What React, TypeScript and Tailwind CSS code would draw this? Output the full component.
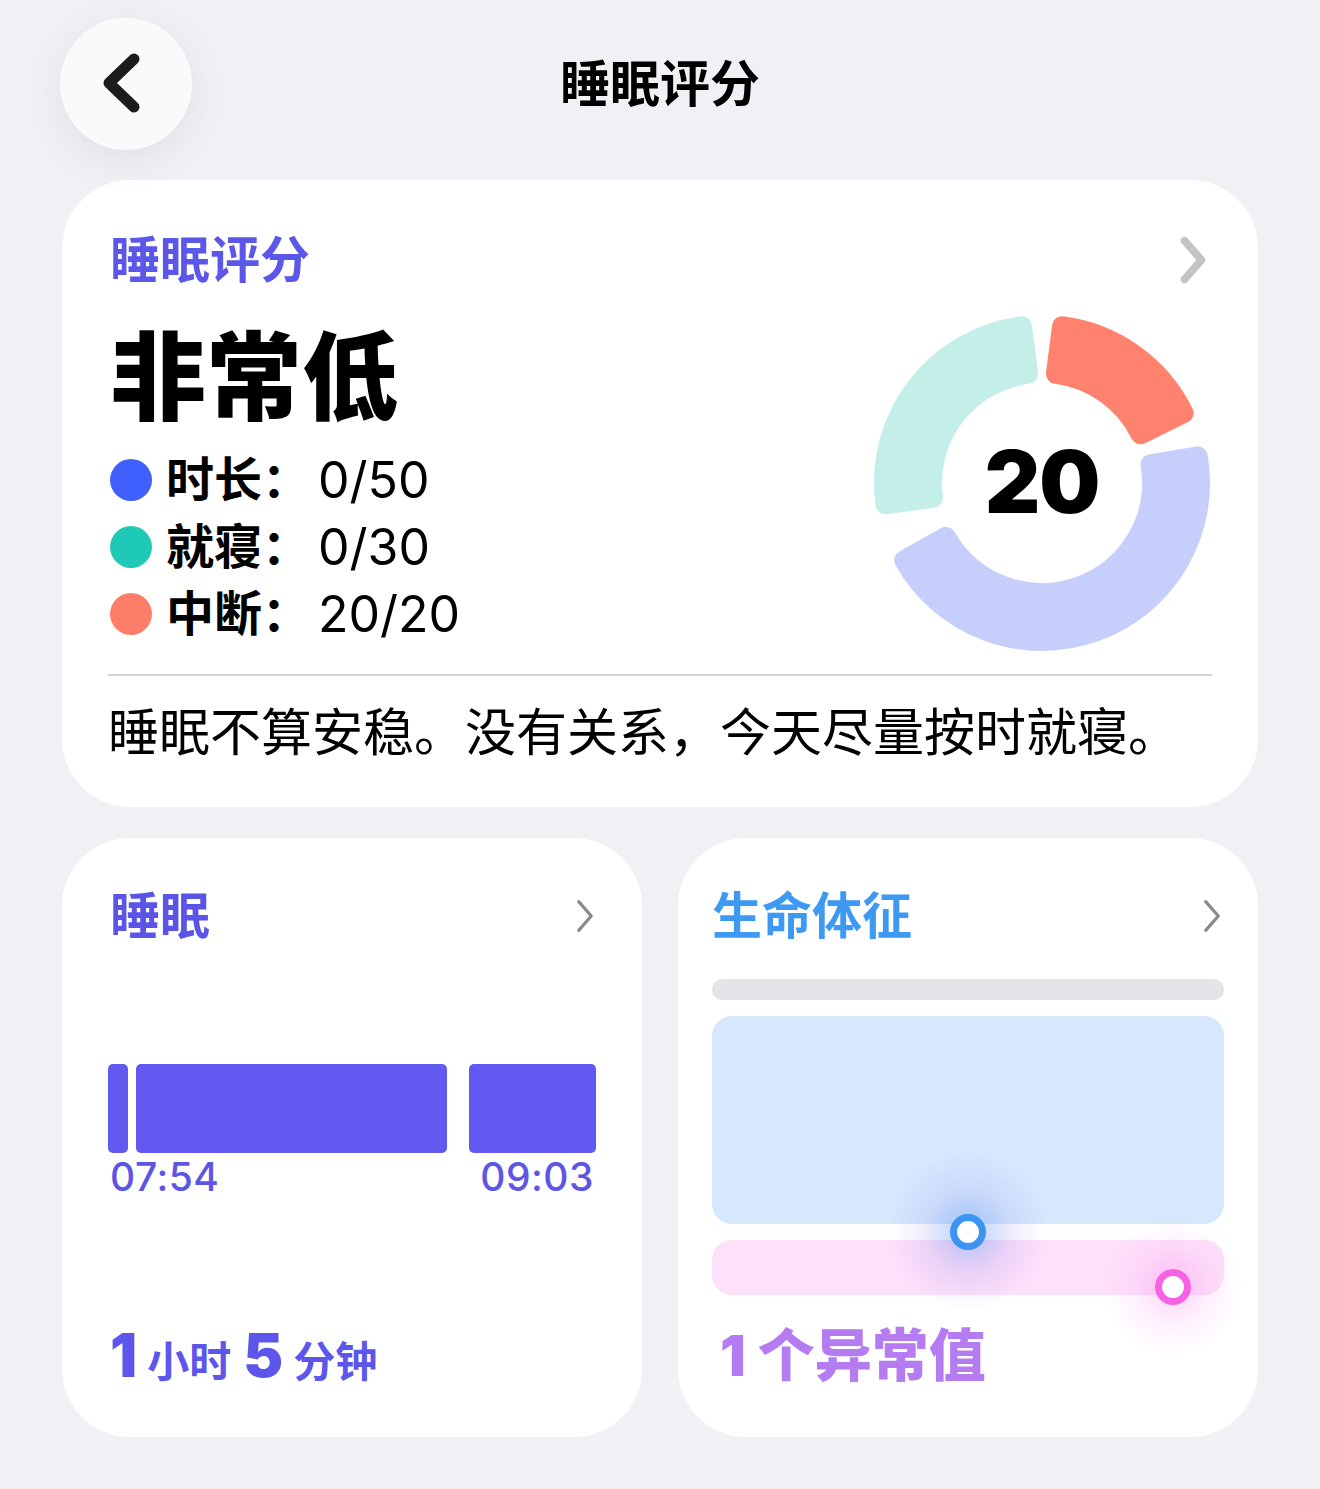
import React from 'react'

// donut geometry: 336px box, ring between r=100 and r=168
const C = 168
const STROKE = 20

function point(angle: number, r: number) {
  const t = (angle * Math.PI) / 180
  return [C + r * Math.sin(t), C - r * Math.cos(t)]
}

// annular sector, angles clockwise from 12 o'clock; inset by half the stroke so round joins soften the corners
function sector(a0: number, a1: number) {
  const ro = 168 - STROKE / 2
  const ri = 100 + STROKE / 2
  const pad = (STROKE / 2 / 134) * (180 / Math.PI)
  const s = a0 + pad
  const e = a1 - pad
  const large = e - s > 180 ? 1 : 0
  const [x0, y0] = point(s, ro)
  const [x1, y1] = point(e, ro)
  const [x2, y2] = point(e, ri)
  const [x3, y3] = point(s, ri)
  return `M${x0} ${y0} A${ro} ${ro} 0 ${large} 1 ${x1} ${y1} L${x2} ${y2} A${ri} ${ri} 0 ${large} 0 ${x3} ${y3} Z`
}

const segments = [
  { from: 258, to: 357, color: '#c3efe8' },
  { from: 3, to: 68, color: '#fe826e' },
  { from: 76, to: 245, color: '#c6cffb' },
]

const legend = [
  { label: '时长：', value: '0/50', dot: 'bg-[#4060fe]' },
  { label: '就寝：', value: '0/30', dot: 'bg-[#1ec9b5]' },
  { label: '中断：', value: '20/20', dot: 'bg-[#fe7d69]' },
]

function ChevronRight({ className }: { className?: string }) {
  return (
    <svg viewBox="0 0 24 40" className={className} fill="none" stroke="currentColor" strokeLinecap="round" strokeLinejoin="round">
      <path d="M5 4 L19 20 L5 36" />
    </svg>
  )
}

function ScoreRing() {
  return (
    <div className="relative w-[336px] h-[336px] mt-[27px]">
      <svg width="336" height="336" viewBox="0 0 336 336">
        {segments.map((s) => (
          <path key={s.from} d={sector(s.from, s.to)} fill={s.color} stroke={s.color} strokeWidth={STROKE} strokeLinejoin="round" />
        ))}
      </svg>
      <div className="absolute inset-0 flex items-center justify-center">
        <span className="text-[86px] font-black leading-none text-black tracking-[-1px] -mt-[2px]">20</span>
      </div>
    </div>
  )
}

export default function App() {
  return (
    <div className="min-h-screen w-[1320px] bg-[#f1f0f5] px-[62px] pb-[52px] font-[Inter,'Noto_Sans_CJK_SC',sans-serif]">
      {/* Header */}
      <div className="grid grid-cols-[132px_1fr_132px] items-center pt-[18px] mb-[30px]">
        <button className="w-[132px] h-[132px] -ml-[2px] rounded-full bg-[#fafafc] shadow-[0_10px_40px_rgba(0,0,0,0.07)] flex items-center justify-center">
          <svg width="44" height="64" viewBox="0 0 44 64" fill="none" stroke="#1c1c1e" strokeWidth="11" strokeLinecap="round" strokeLinejoin="round" className="-ml-[10px]">
            <path d="M35 7 L10 31 L35 55" />
          </svg>
        </button>
        <h1 className="text-center text-[50px] font-bold leading-[56px] text-black">睡眠评分</h1>
        <div />
      </div>

      {/* Score card */}
      <div className="rounded-[68px] bg-white px-[48px] pt-[52px] pb-[44px]">
        <div className="flex items-center justify-between h-[56px]">
          <h2 className="text-[50px] font-bold leading-[56px] text-[#5b57e8]">睡眠评分</h2>
          <ChevronRight className="w-[30px] h-[48px] stroke-[6.5px] text-[#c4c4c8] mr-[2px]" />
        </div>

        <div className="flex items-start justify-between">
          <div className="pt-[37px]">
            <div className="text-[96px] font-black leading-[104px] text-black">非常低</div>
            <div className="mt-[17px] flex flex-col">
              {legend.map((row) => (
                <div key={row.label} className="flex items-center h-[67px]">
                  <span className={`w-[42px] h-[42px] rounded-full ${row.dot}`} />
                  <span className="ml-[14px] text-[48px] font-bold leading-none text-black">{row.label}</span>
                  <span className="ml-[8px] text-[50px] font-normal leading-none text-black">{row.value}</span>
                </div>
              ))}
            </div>
          </div>
          <ScoreRing />
        </div>

        <div className="mt-[23px] h-[1.5px] bg-[#d3d3d7] -mx-[2px]" />
        <p className="mt-[27px] text-[51px] leading-[60px] text-black -ml-[2px]">睡眠不算安稳。没有关系，今天尽量按时就寝。</p>
      </div>

      {/* Bottom cards */}
      <div className="grid grid-cols-2 gap-[36px] mt-[31px]">
        <div className="rounded-[68px] bg-white h-[599px] px-[48px] pt-[50px] flex flex-col">
          <div className="flex items-center justify-between h-[56px]">
            <h2 className="text-[50px] font-bold leading-[56px] text-[#5a55e6]">睡眠</h2>
            <ChevronRight className="w-[22px] h-[36px] stroke-[3.5px] text-[#88888d] -mr-[2px]" />
          </div>
          <div className="mt-[120px] flex h-[89px] -mx-[2px]">
            <div className="w-[20px] rounded-[5px] bg-[#6259f1]" />
            <div className="ml-[8px] flex-1 rounded-[5px] bg-[#6259f1]" />
            <div className="ml-[22px] w-[127px] rounded-[5px] bg-[#6259f1]" />
          </div>
          <div className="mt-[4px] flex justify-between text-[39px] font-medium leading-[40px] text-[#5d56e4] tracking-[0.5px]">
            <span>07:54</span>
            <span>09:03</span>
          </div>
          <div className="mt-[126px] flex items-baseline text-[#5d56ea] leading-[64px]">
            <span className="text-[60px] font-black">1</span>
            <span className="ml-[10px] text-[42px] font-bold">小时</span>
            <span className="ml-[12px] text-[60px] font-black">5</span>
            <span className="ml-[10px] text-[42px] font-bold">分钟</span>
          </div>
        </div>

        <div className="rounded-[68px] bg-white h-[599px] px-[34px] pt-[50px] flex flex-col">
          <div className="flex items-center justify-between h-[56px]">
            <h2 className="text-[50px] font-bold leading-[56px] text-[#3d99f2]">生命体征</h2>
            <ChevronRight className="w-[22px] h-[36px] stroke-[3.5px] text-[#88888d] mr-[1px]" />
          </div>
          <div className="mt-[35px] h-[21px] rounded-full bg-[#e3e3e8]" />
          <div className="relative mt-[16px]">
            <div className="h-[208px] rounded-[20px] bg-[#d5e8fd]" />
            <div className="mt-[16px] h-[55px] rounded-[20px] bg-[#fde0f9]" />
            {/* readings */}
            <div className="absolute left-[176px] top-[136px] w-[160px] h-[160px] rounded-full bg-[radial-gradient(circle,rgba(90,150,245,0.45)_0%,rgba(160,140,240,0.15)_40%,rgba(255,255,255,0)_70%)]" />
            <div className="absolute left-[238px] top-[198px] w-[36px] h-[36px] rounded-full border-[7px] border-[#3b94f0] bg-white" />
            <div className="absolute left-[391px] top-[201px] w-[140px] h-[140px] rounded-full bg-[radial-gradient(circle,rgba(250,110,230,0.3)_0%,rgba(250,150,240,0.12)_40%,rgba(255,255,255,0)_70%)]" />
            <div className="absolute left-[443px] top-[253px] w-[36px] h-[36px] rounded-full border-[7px] border-[#f662e5] bg-white" />
          </div>
          <div className="mt-[29px] pl-[8px] flex items-baseline text-[57px] font-black leading-[64px] text-[#b57cf1]">
            <span className="mr-[12px]">1</span>
            <span>个异常值</span>
          </div>
        </div>
      </div>
    </div>
  )
}
